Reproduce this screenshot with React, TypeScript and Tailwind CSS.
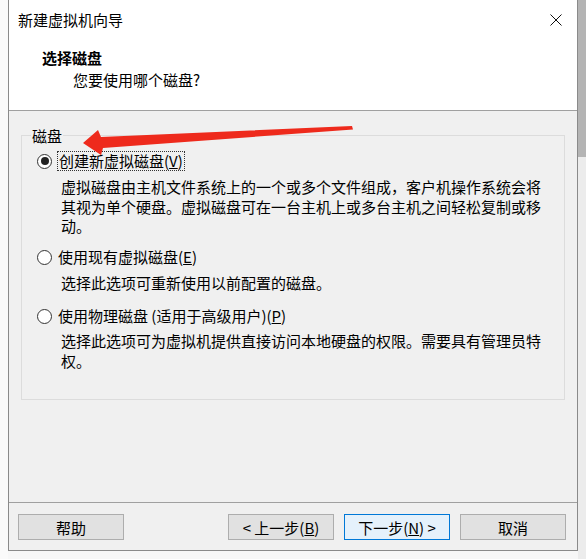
import React from "react";

const font = { fontFamily: '"Noto Sans CJK SC", "Noto Sans", sans-serif' };

function Radio({ checked }: { checked?: boolean }) {
  return (
    <span className="w-[15px] h-[15px] rounded-full border border-[#333333] bg-white flex items-center justify-center shrink-0">
      {checked && <span className="w-[8px] h-[8px] rounded-full bg-[#222222]" />}
    </span>
  );
}

function Btn({ children, primary }: { children: React.ReactNode; primary?: boolean }) {
  return (
    <div
      className={
        "w-[106px] h-[26px] flex items-center justify-center text-[15px] leading-none text-black border " +
        (primary ? "bg-[#e5f1fb] border-[#0078d7]" : "bg-[#e1e1e1] border-[#adadad]")
      }
    >
      {children}
    </div>
  );
}

export default function App() {
  return (
    <div className="relative w-[586px] h-[559px] bg-[#f7f7f7] overflow-hidden flex" style={font}>
      <div className="w-[8px] h-full bg-[#fafafa]" />
      <div className="w-[570px] h-[551px] border-l border-r border-b border-[#8a8a8a] flex flex-col bg-[#f0f0f0]">
        {/* header */}
        <div className="h-[111px] bg-white border-b border-[#a0a0a0] flex flex-col">
          <div className="h-[40px] flex items-center justify-between">
            <span className="pl-[9px] text-[15px] leading-[20px] text-black">新建虚拟机向导</span>
            <span className="w-[42px] flex justify-center">
              <svg width="12" height="12" viewBox="0 0 12 12">
                <path d="M0.5 0.5 L11.5 11.5 M11.5 0.5 L0.5 11.5" stroke="#111" strokeWidth="1" fill="none" />
              </svg>
            </span>
          </div>
          <div className="mt-[8px] pl-[33px] h-[20px] text-[15px] leading-[20px] font-bold text-black">选择磁盘</div>
          <div className="mt-[2px] pl-[64px] h-[20px] text-[15px] leading-[20px] text-black">您要使用哪个磁盘?</div>
        </div>
        {/* body */}
        <div className="h-[391px] pt-[24px] px-[12px]">
          <div className="relative h-[265px] border border-[#dcdcdc] pt-[15px] pl-[15px]">
            <span className="absolute left-[9px] top-[-10px] h-[20px] px-[1px] bg-[#f0f0f0] text-[15px] leading-[20px] text-black">磁盘</span>
            <div className="h-[20px] flex items-center">
              <Radio checked />
              <span className="ml-[5px] h-[20px] px-[1px] border border-dotted border-[#333] flex items-center text-[15px] leading-[18px] text-black">
                创建新虚拟磁盘(<span className="underline">V</span>)
              </span>
            </div>
            <div className="mt-[6px] ml-[24px] text-[15px] leading-[19.5px] text-black whitespace-nowrap">
              虚拟磁盘由主机文件系统上的一个或多个文件组成，客户机操作系统会将
              <br />
              其视为单个硬盘。虚拟磁盘可在一台主机上或多台主机之间轻松复制或移
              <br />
              动。
            </div>
            <div className="mt-[11.5px] h-[20px] flex items-center">
              <Radio />
              <span className="ml-[6px] text-[15px] leading-[20px] text-black">
                使用现有虚拟磁盘(<span className="underline">E</span>)
              </span>
            </div>
            <div className="mt-[6px] ml-[24px] text-[15px] leading-[19.5px] text-black whitespace-nowrap">
              选择此选项可重新使用以前配置的磁盘。
            </div>
            <div className="mt-[13.5px] h-[20px] flex items-center">
              <Radio />
              <span className="ml-[6px] text-[15px] leading-[20px] text-black">
                使用物理磁盘 (适用于高级用户)(<span className="underline">P</span>)
              </span>
            </div>
            <div className="mt-[5px] ml-[24px] text-[15px] leading-[19.5px] text-black whitespace-nowrap">
              选择此选项可为虚拟机提供直接访问本地硬盘的权限。需要具有管理员特
              <br />
              权。
            </div>
          </div>
        </div>
        {/* footer */}
        <div className="h-[48px] border-t border-[#a0a0a0] pt-[11px] pl-[9px] pr-[11px] flex items-start">
          <Btn>帮助</Btn>
          <div className="ml-auto flex gap-[10px]">
            <Btn>
              &lt; 上一步(<span className="underline">B</span>)
            </Btn>
            <Btn primary>
              下一步(<span className="underline">N</span>) &gt;
            </Btn>
            <Btn>取消</Btn>
          </div>
        </div>
      </div>
      <div className="flex-1 h-full flex flex-col">
        <div className="h-[157px] bg-[#b4b4b4]" />
        <div className="flex-1 bg-[#ececec]" />
      </div>
      <svg className="absolute inset-0 pointer-events-none" width="586" height="559" viewBox="0 0 586 559">
        <polygon
          points="83,143 98,130 101,137 352,126 353,129.5 103,148 101,155"
          fill="#ee2a1c"
        />
      </svg>
    </div>
  );
}
